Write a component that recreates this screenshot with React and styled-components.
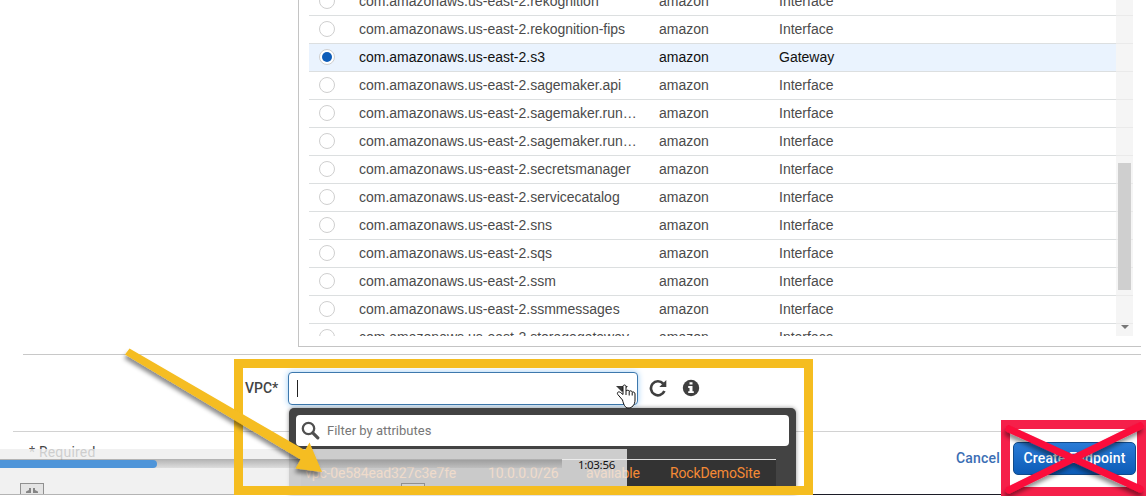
import React from "react";
import styled, { createGlobalStyle } from "styled-components";

const Global = createGlobalStyle`
  * { box-sizing: border-box; }
  html, body { margin: 0; padding: 0; overflow: hidden; background: #fff; }
  body { font-family: Roboto, "Liberation Sans", sans-serif; font-size: 14px; color: #444; }
`;

const Page = styled.main`
  position: relative;
  width: 1146px;
  height: 496px;
  overflow: hidden;
  background: #fff;
`;

const TablePanel = styled.section`
  display: flex;
  height: 347px;
  margin: 0 5px 0 298px;
  padding: 0 8px 10px 10px;
  border-left: 1px solid #c4c4c4;
  border-bottom: 1px solid #c4c4c4;
`;

const Rows = styled.div`
  width: 807px;
  height: 336px;
  overflow: hidden;
  display: flex;
  flex-direction: column;
  flex: none;
`;

const Row = styled.div`
  display: grid;
  grid-template-columns: 50px 300px 120px 1fr;
  align-items: center;
  flex: none;
  height: 28px;
  margin-top: ${(p) => (p.$first ? "-12px" : "0")};
  padding-bottom: 1px;
  border-bottom: 1px solid #dcdfe0;
  background: ${(p) => (p.$selected ? "#eaf3fe" : "#fff")};
  color: ${(p) => (p.$selected ? "#111" : "#4b4b4b")};
  font-family: "Liberation Sans", Arial, sans-serif;
  font-size: 14px;
`;

const Cell = styled.span`
  overflow: hidden;
  white-space: nowrap;
  text-overflow: ellipsis;
  line-height: 20px;
`;

const Radio = styled.span`
  display: grid;
  place-items: center;
  width: 16px;
  height: 16px;
  margin-left: 10px;
  border: 1px solid #cfcfcf;
  border-radius: 50%;
  background: #fff;

  &::after {
    content: "";
    width: 10px;
    height: 10px;
    border-radius: 50%;
    background: ${(p) => (p.$on ? "#0d5cb8" : "transparent")};
  }
`;

const Scrollbar = styled.div`
  display: flex;
  flex-direction: column;
  align-items: center;
  width: 17px;
  height: 336px;
  padding-top: 163px;
  background: repeating-linear-gradient(#f5f5f5 0 15px, #eaeaea 15px 16px, #f5f5f5 16px 28px);
`;

const Thumb = styled.div`
  width: 13px;
  height: 127px;
  background: #cfcfcf;
`;

const ScrollArrow = styled.div`
  margin-top: 35px;
  border: 4px solid transparent;
  border-top-color: #777;
  border-bottom: 0;
`;

const FormArea = styled.section`
  height: 78px;
  margin: 7px 5px 0 23px;
  padding-top: 17px;
  border-top: 1px solid #c8c8c8;
`;

const Field = styled.div`
  display: flex;
  align-items: center;
  height: 33px;
  padding-left: 222px;
`;

const Label = styled.label`
  width: 43px;
  font-size: 14px;
  font-weight: 500;
  line-height: 20px;
  margin-top: -2px;
`;

const SelectBox = styled.div`
  display: flex;
  align-items: center;
  justify-content: space-between;
  width: 350px;
  height: 33px;
  padding: 0 9px 0 8px;
  border: 1px solid #3d78ad;
  border-radius: 4px;
  background: #fff;
  box-shadow: 0 0 6px #9cccf5;
`;

const Caret = styled.span`
  width: 1px;
  height: 17px;
  background: #222;
`;

const Chevron = styled.span`
  border: 6px solid transparent;
  border-top-color: #3b3b3b;
  border-bottom: 0;
`;

const FieldIcon = styled.svg`
  width: 18px;
  height: 18px;
  margin: -2px 0 0 ${(p) => p.$gap};
`;

const Footer = styled.footer`
  display: flex;
  justify-content: space-between;
  align-items: flex-start;
  height: 63px;
  margin: -1px 5px 0 13px;
  padding: 10px 5px 0 16px;
  border-top: 1px solid #d2d2d2;
`;

const Required = styled.span`
  font-size: 14px;
  line-height: 20px;
  letter-spacing: 0.2px;
`;

const Actions = styled.div`
  display: flex;
  align-items: center;
  gap: 13px;
`;

const Cancel = styled.span`
  margin-top: -2px;
  color: #3b6eb4;
  font-weight: 500;
  letter-spacing: 0.2px;
`;

const Create = styled.button`
  width: 123px;
  height: 33px;
  padding: 0 0 2px;
  border: 1px solid #114b8b;
  border-radius: 5px;
  background: linear-gradient(#2a7bd6, #0c5cb8);
  color: #fff;
  font: 500 14px Roboto, sans-serif;
  letter-spacing: 0.12px;
  white-space: nowrap;
`;

const BottomEdge = styled.div`
  height: 1px;
  background: linear-gradient(90deg, #b4b4b4 627px, #1c1c26 627px);
`;

const Dropdown = styled.div`
  position: absolute;
  left: 289px;
  top: 408px;
  width: 507px;
  height: 86px;
  padding: 7px 7px 0;
  border-radius: 5px 5px 0 0;
  background: #434343;
  box-shadow: 0 0 4px rgba(0, 0, 0, 0.45);
`;

const Filter = styled.div`
  display: flex;
  align-items: center;
  gap: 7px;
  height: 31px;
  padding: 0 0 1px 5px;
  border-radius: 4px;
  background: #fff;
  color: #777;
  font-size: 13px;
`;

const Options = styled.div`
  display: grid;
  grid-template-columns: 183px 98px 84px 1fr;
  align-items: center;
  height: 36px;
  margin: 13px 13px 0 5px;
  padding: 0 0 10px 4px;
  border-top: 1px solid #ddd;
  background: #333;
  color: #f58a35;
  letter-spacing: -0.13px;
  white-space: nowrap;
`;

const Player = styled.div`
  position: absolute;
  left: 0;
  top: 449px;
  width: 627px;
  height: 45px;
  padding-top: 10px;
  background: rgba(238, 238, 238, 0.81);
`;

const PlayerTop = styled.div`
  display: flex;
  gap: 16px;
  height: 24px;
`;

const Track = styled.div`
  width: 562px;
  height: 9px;
  padding-top: 1px;
  background: linear-gradient(rgba(90, 90, 90, 0.42), rgba(150, 150, 150, 0.22));
`;

const Played = styled.div`
  width: 157px;
  height: 8px;
  border-radius: 0 4px 4px 0;
  background: #4f95d9;
`;

const Time = styled.span`
  margin-top: -2px;
  color: #111;
  font: 11.5px/16px "Noto Sans", sans-serif;
  letter-spacing: -0.3px;
`;

const PlayerButtons = styled.div`
  display: flex;
  gap: 357px;
  padding-left: 20px;
`;

const PlayerButton = styled.span`
  display: flex;
  justify-content: center;
  width: 24px;
  height: 11px;
  border: 1px solid #909090;
  border-bottom: 0;
  background: rgba(215, 215, 215, 0.5);
`;

const Highlight = styled.div`
  position: absolute;
  left: 234px;
  top: 359px;
  width: 579px;
  height: 136px;
  border: 9px solid #f5bd20;
`;

const Forbidden = styled.div`
  position: absolute;
  left: 1001px;
  top: 420px;
  width: 145px;
  height: 76px;
  border: 9px solid #f5204a;
`;

const Drawing = styled.svg`
  position: absolute;
  inset: 0;
  pointer-events: none;
`;

const services = [
  ["rekognition", "Interface"],
  ["rekognition-fips", "Interface"],
  ["s3", "Gateway"],
  ["sagemaker.api", "Interface"],
  ["sagemaker.run…", "Interface"],
  ["sagemaker.run…", "Interface"],
  ["secretsmanager", "Interface"],
  ["servicecatalog", "Interface"],
  ["sns", "Interface"],
  ["sqs", "Interface"],
  ["ssm", "Interface"],
  ["ssmmessages", "Interface"],
  ["storagegateway", "Interface"],
];

export default function App() {
  return (
    <>
      <Global />
      <Page>
        <TablePanel>
          <Rows>
            {services.map(([name, type], i) => (
              <Row key={i} $first={i === 0} $selected={i === 2}>
                <Radio $on={i === 2} />
                <Cell>{"com.amazonaws.us-east-2." + name}</Cell>
                <Cell>amazon</Cell>
                <Cell>{type}</Cell>
              </Row>
            ))}
          </Rows>
          <Scrollbar>
            <Thumb />
            <ScrollArrow />
          </Scrollbar>
        </TablePanel>

        <FormArea>
          <Field>
            <Label>VPC*</Label>
            <SelectBox>
              <Caret />
              <Chevron />
            </SelectBox>
            <FieldIcon $gap="11px" viewBox="0 0 18 18">
              <path d="M14.2 4.6A7 7 0 1 0 15.4 12" fill="none" stroke="#3f3f3f" strokeWidth="2.7" />
              <path d="M17.3 1v7h-7z" fill="#3f3f3f" />
            </FieldIcon>
            <FieldIcon $gap="15px" viewBox="0 0 18 18">
              <circle cx="9" cy="9" r="8.2" fill="#3f3f3f" />
              <path d="M7.5 3.2h3v2.4h-3zM6.2 7h4.3v5.2h1.3v1.9H6.2v-1.9h1.3V8.9H6.2z" fill="#fff" />
            </FieldIcon>
          </Field>
        </FormArea>

        <Footer>
          <Required>* Required</Required>
          <Actions>
            <Cancel>Cancel</Cancel>
            <Create>Create Endpoint</Create>
          </Actions>
        </Footer>
        <BottomEdge />

        <Dropdown>
          <Filter>
            <svg width="19" height="19" viewBox="0 0 19 19">
              <circle cx="7.5" cy="7.5" r="5.7" fill="none" stroke="#505050" strokeWidth="2.3" />
              <path d="M11.8 11.8l5 5" stroke="#505050" strokeWidth="3.2" strokeLinecap="round" />
            </svg>
            Filter by attributes
          </Filter>
          <Options>
            <span>vpc-0e584ead327c3e7fe</span>
            <span>10.0.0.0/26</span>
            <span>available</span>
            <span>RockDemoSite</span>
          </Options>
        </Dropdown>

        <Player>
          <PlayerTop>
            <Track>
              <Played />
            </Track>
            <Time>1:03:56</Time>
          </PlayerTop>
          <PlayerButtons>
            <PlayerButton>
              <svg width="14" height="10" viewBox="0 0 14 10">
                <path d="M6 4v5H1V7.500L4 6V4zM8 4v5h5V7.500L10 6V4z" fill="#858585" />
              </svg>
            </PlayerButton>
            <PlayerButton />
          </PlayerButtons>
        </Player>

        <Highlight />
        <Forbidden />

        <Drawing width="1146" height="496" viewBox="0 0 1146 496">
          <defs>
            <filter id="shade" x="-10%" y="-10%" width="120%" height="130%">
              <feDropShadow dx="-1" dy="4" stdDeviation="2" floodColor="#000" floodOpacity="0.45" />
            </filter>
          </defs>
          <path
            d="M129.500 348.500L305 450.200 309.500 442.500 322 472 295.500 468.500 300.500 459.500 125 354.500z"
            fill="#f5bd20"
            filter="url(#shade)"
          />
          <path
            d="M1009 429L1140 489M1140 426L1009 490"
            stroke="#fb0a3a"
            strokeWidth="7"
            strokeLinecap="round"
            filter="url(#shade)"
          />
          <path
            d="M622.500 400L617.800 394.500C616.500 392.500 618.500 391 620.500 392.500L623 394.500V386.500C623 384.500 626 384.500 626 386.500V391C627 389.800 629 390 629.200 391.300C630.500 390.300 632 391 632.200 392.200C633.500 391.500 635 392.300 635 394V400C635 405 632 408 628 408C625 408 623.500 404 622.500 400Z"
            fill="#fff"
            stroke="#111"
            strokeWidth="1"
          />
          <path d="M626 391v4M629.200 391.500v4M632.200 392.500v3" stroke="#111" strokeWidth="1" />
        </Drawing>
      </Page>
    </>
  );
}
